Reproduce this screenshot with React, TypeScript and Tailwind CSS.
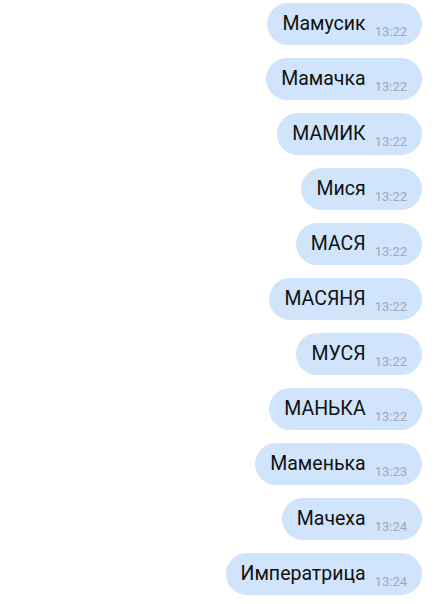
const messages = [
  { text: "Мамусик", time: "13:22" },
  { text: "Мамачка", time: "13:22" },
  { text: "МАМИК", time: "13:22" },
  { text: "Мися", time: "13:22" },
  { text: "МАСЯ", time: "13:22" },
  { text: "МАСЯНЯ", time: "13:22" },
  { text: "МУСЯ", time: "13:22" },
  { text: "МАНЬКА", time: "13:22" },
  { text: "Маменька", time: "13:23" },
  { text: "Мачеха", time: "13:24" },
  { text: "Императрица", time: "13:24" },
];

export default function App() {
  return (
    <div
      className="flex h-[604px] w-[436px] flex-col items-end gap-[13px] overflow-hidden bg-white pt-[3px] pr-[14px]"
      style={{ fontFamily: "Roboto, 'Noto Sans', sans-serif" }}
    >
      {messages.map((m, i) => (
        <div
          key={i}
          className="flex h-[42px] items-center rounded-full bg-[#d0e4fc] pl-[15px] pr-[15px]"
        >
          <span className="text-[19.5px] leading-none text-[#111]">{m.text}</span>
          <span className="ml-[9px] mt-[14px] text-[13px] leading-none text-[#a0a9b5]">
            {m.time}
          </span>
        </div>
      ))}
    </div>
  );
}
